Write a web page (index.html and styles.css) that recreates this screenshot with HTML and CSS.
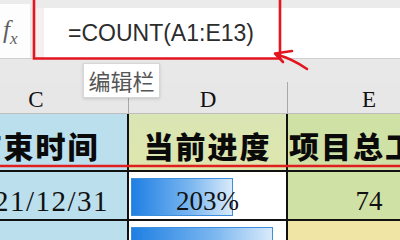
FILE: index.html
```html
<!DOCTYPE html>
<html>
<head>
<meta charset="utf-8">
<link rel="stylesheet" href="styles.css">
</head>
<body>
<div class="page">
  <div class="top-strip"></div>
  <div class="formula-row">
    <div class="fx-box"><span class="fx">f<span class="fx-x">x</span></span></div>
    <div class="fx-gap"></div>
    <div class="formula">=COUNT(A1:E13)</div>
  </div>
  <div class="toolbar-gap"></div>
  <div class="sheet">
    <div class="colhead">C</div>
    <div class="colhead">D</div>
    <div class="colhead last">E</div>

    <div class="cell th blue"><span>结束时间</span></div>
    <div class="cell th green-y"><span>当前进度</span></div>
    <div class="cell th green last"><span>项目总工期</span></div>

    <div class="cell num date blue"><span>2021/12/31</span></div>
    <div class="cell num white"><i class="bar" style="width:102px"></i><span>203%</span></div>
    <div class="cell num green last"><span>74</span></div>

    <div class="cell num date blue"><span>2021/12/31</span></div>
    <div class="cell num white"><i class="bar" style="width:142px"></i><span>221%</span></div>
    <div class="cell num yellow last"><span>48</span></div>
  </div>
  <div class="tooltip">编辑栏</div>
  <svg class="annot" width="400" height="240" viewBox="0 0 400 240">
    <path d="M34 -3 V58.5 H280 V-3" fill="none" stroke="#e3151f" stroke-width="2.6"/>
    <path d="M292 51 L275 53.5 L283 62 M276 54.5 Q291 58 307 69" fill="none" stroke="#e3151f" stroke-width="2.6" stroke-linecap="round" stroke-linejoin="round"/>
    <line x1="0" y1="166" x2="400" y2="166" stroke="#e01e1e" stroke-width="2.6"/>
  </svg>
</div>
</body>
</html>
```
FILE: styles.css
```css
html, body {
  margin: 0;
  padding: 0;
}
body {
  width: 400px;
  height: 240px;
  overflow: hidden;
  background: #e8e8e8;
}
.page {
  position: relative;
  width: 400px;
  height: 240px;
  overflow: hidden;
  background: #e8e8e8;
}
.top-strip {
  height: 8px;
  background: #ebebeb;
}
.formula-row {
  display: flex;
  height: 50px;
  border-bottom: 1px solid #cfcfcf;
}
.fx-box {
  width: 30px;
  margin-top: -4px;
  background: #fdfdfd;
  display: flex;
  align-items: flex-start;
  padding-left: 3px;
  padding-top: 13px;
  box-sizing: border-box;
}
.fx {
  font-family: "Liberation Serif", serif;
  font-style: italic;
  font-size: 25px;
  line-height: 25px;
  color: #5e5e5e;
}
.fx-x {
  font-size: 17px;
  position: relative;
  top: 6px;
}
.fx-gap {
  width: 14px;
  background: linear-gradient(to right, #e9e9e9 0 4px, #f6eff0 4px);
}
.formula {
  flex: 1;
  background: #ffffff;
  display: flex;
  align-items: center;
  padding-left: 24px;
  font-family: "Liberation Sans", Arial, sans-serif;
  font-size: 23px;
  color: #2c2c2c;
}
.toolbar-gap {
  height: 23px;
}
.sheet {
  display: grid;
  grid-template-columns: 185px 159px 162px;
  grid-template-rows: 32px 58px 49px 49px;
  margin-left: -56px;
}
.colhead {
  background: #e7e7e7;
  border-right: 1px solid #a9a9a9;
  border-bottom: 1px solid #bdbdbd;
  display: flex;
  align-items: center;
  justify-content: center;
  font-family: "Liberation Serif", serif;
  font-size: 23px;
  color: #111;
  padding-top: 4px;
}
.colhead.last { border-right: none; }
.cell {
  position: relative;
  overflow: hidden;
  display: flex;
  justify-content: center;
  align-items: flex-start;
  border-right: 2px solid #111;
  border-bottom: 2px solid #111;
  white-space: nowrap;
}
.cell.last { border-right: none; }
.cell span { position: relative; }
.th {
  font-family: "Noto Sans CJK SC", "Noto Sans", sans-serif;
  font-weight: 900;
  font-size: 30px;
  line-height: 36px;
  letter-spacing: 2px;
  padding-top: 13px;
  color: #0a0a0a;
}
.num {
  font-family: "Liberation Serif", serif;
  font-size: 27px;
  line-height: 38px;
  padding-top: 10px;
  color: #111;
}
.num.date {
  font-size: 29px;
  letter-spacing: 1.5px;
}
.blue { background: #bcdfee; }
.green-y { background: linear-gradient(to bottom, #d9e5b4, #dfe6ad); }
.green { background: #d0e1a6; }
.white { background: #ffffff; }
.yellow { background: #f1e5a6; }
.bar {
  position: absolute;
  left: 2px;
  top: 6px;
  bottom: 3px;
  border: 1px solid #3d8fdb;
  box-sizing: border-box;
  background: linear-gradient(to right, #1f7fe3, #7db8f0 60%, #d9eafa);
}
.tooltip {
  position: absolute;
  left: 83px;
  top: 63px;
  width: 77px;
  height: 35px;
  box-sizing: border-box;
  background: #ffffff;
  border: 1px solid #d6d6d6;
  box-shadow: 0 1px 3px rgba(0,0,0,0.15);
  font-family: "Noto Sans CJK SC", sans-serif;
  font-size: 22px;
  line-height: 33px;
  text-align: center;
  color: #555;
}
.annot {
  position: absolute;
  left: 0;
  top: 0;
  pointer-events: none;
}
```
